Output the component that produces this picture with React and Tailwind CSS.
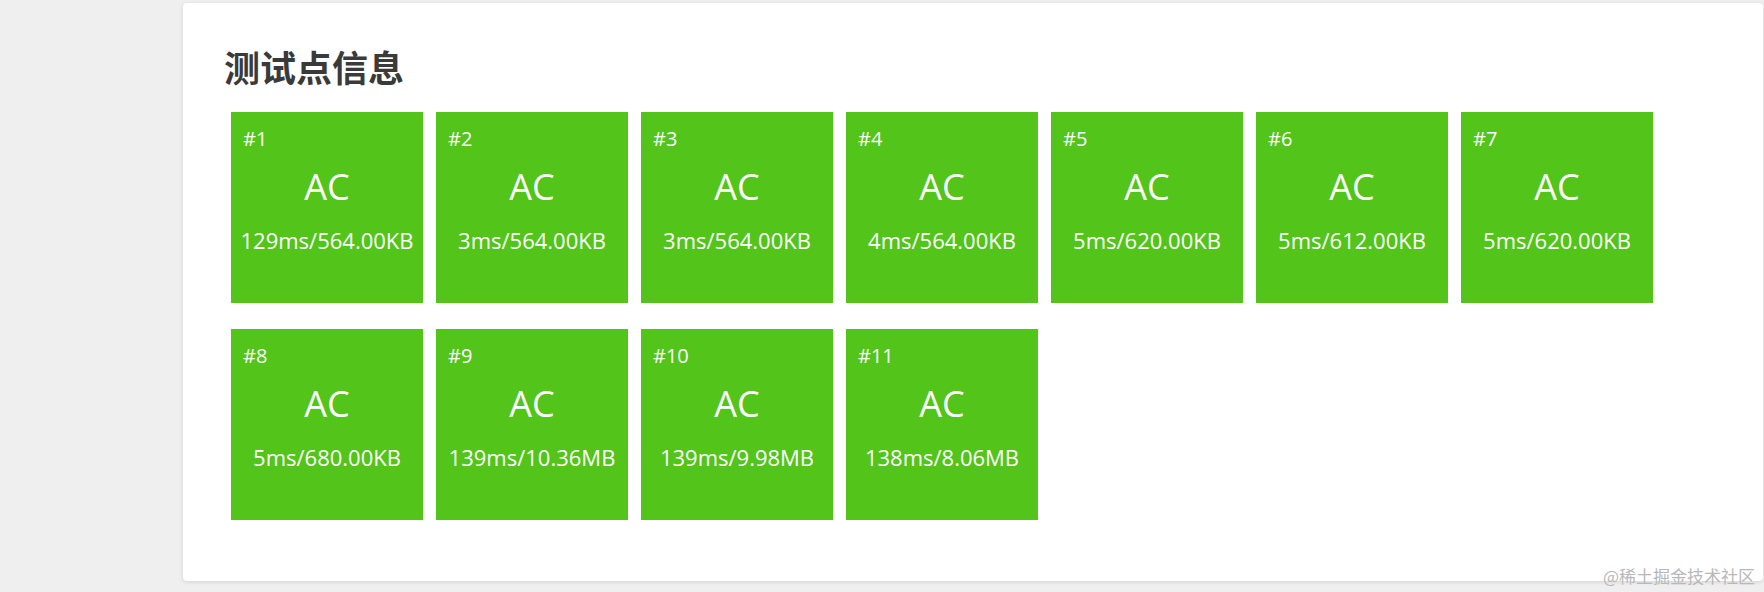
import React from 'react';

const cases = [
  { id: 1, stat: '129ms/564.00KB' },
  { id: 2, stat: '3ms/564.00KB' },
  { id: 3, stat: '3ms/564.00KB' },
  { id: 4, stat: '4ms/564.00KB' },
  { id: 5, stat: '5ms/620.00KB' },
  { id: 6, stat: '5ms/612.00KB' },
  { id: 7, stat: '5ms/620.00KB' },
  { id: 8, stat: '5ms/680.00KB' },
  { id: 9, stat: '139ms/10.36MB' },
  { id: 10, stat: '139ms/9.98MB' },
  { id: 11, stat: '138ms/8.06MB' },
];

const Tile = ({ id, stat }) => (
  <div className="w-[192px] h-[191px] bg-[#52c41a] text-white flex flex-col px-3 pt-[15px]">
    <div className="text-[20px] leading-[24px] text-left">#{id}</div>
    <div className="text-[36px] leading-[48px] text-center mt-[12px]">AC</div>
    <div className="text-[22px] leading-[30px] text-center mt-[14px] whitespace-nowrap -mx-3">{stat}</div>
  </div>
);

export default function App() {
  return (
    <div className="relative w-[1764px] h-[592px] bg-[#efefef] overflow-hidden pt-[3px] font-['Open_Sans','Noto_Sans_CJK_SC',sans-serif]">
      <div className="ml-[183px] mr-[1px] h-[578px] bg-white rounded-[4px] shadow-[0_1px_4px_rgba(0,0,0,0.12)] pl-[41px] pt-[45px]">
        <h2 className="text-[36px] leading-[36px] font-bold text-[#3a3a3a] font-['Noto_Sans_CJK_SC',sans-serif]">
          测试点信息
        </h2>
        <div className="ml-[7px] mt-[28px] grid grid-cols-[repeat(7,192px)] gap-x-[13px] gap-y-[26px]">
          {cases.map((c) => (
            <Tile key={c.id} {...c} />
          ))}
        </div>
      </div>
      <div className="absolute right-[9px] bottom-[5px] text-[17px] leading-[22px] text-[#b8b8b8] font-['Noto_Sans_CJK_SC',sans-serif]">
        @稀土掘金技术社区
      </div>
    </div>
  );
}
